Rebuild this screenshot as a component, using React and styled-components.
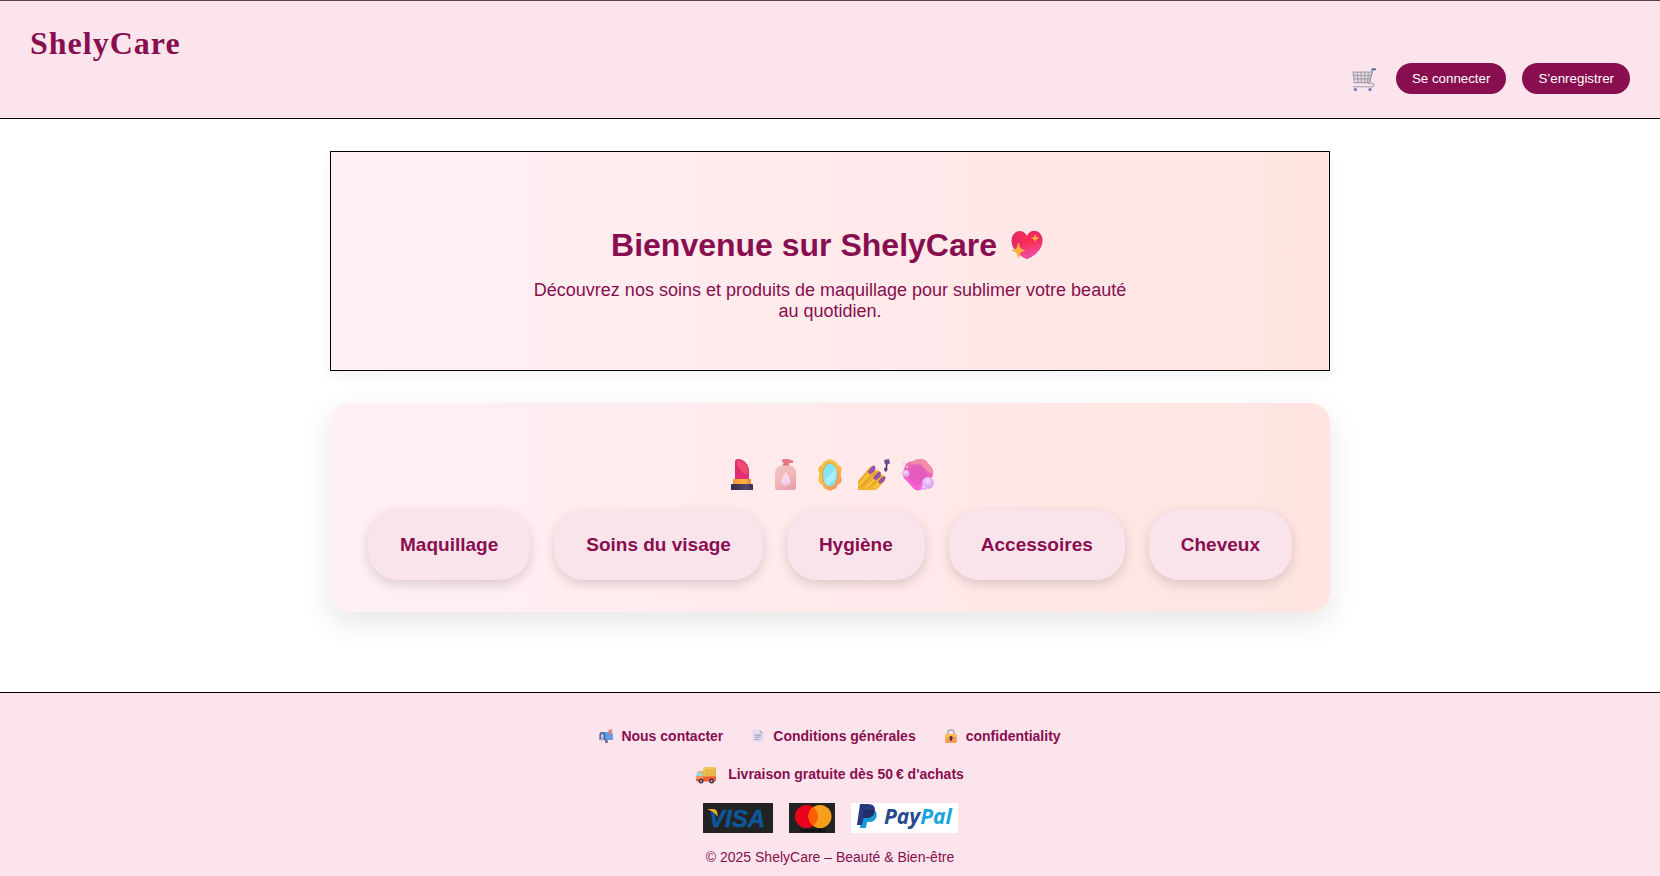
import React from "react";
import styled, { createGlobalStyle } from "styled-components";

const plum = "#880e4f";
const blush = "#fce4ec";

const GlobalStyle = createGlobalStyle`
  *, *::before, *::after { box-sizing: border-box; }
  body {
    margin: 0;
    background: #fff;
    color: ${plum};
    font-family: "Liberation Sans", Arial, sans-serif;
  }
  h1, p, ul { margin: 0; padding: 0; }
`;

const Page = styled.div`
  display: flex;
  flex-direction: column;
  min-height: 100vh;
`;

const Header = styled.header`
  display: flex;
  flex-direction: column;
  gap: 2px;
  padding: 24px 30px;
  background: ${blush};
  border-top: 1px solid #5a444c;
  border-bottom: 1px solid #000;
`;

const Brand = styled.a`
  align-self: flex-start;
  color: ${plum};
  font: bold 32px/36px "Liberation Serif", "Times New Roman", serif;
  letter-spacing: 1px;
  text-decoration: none;
`;

const Account = styled.nav`
  display: flex;
  align-items: center;
  justify-content: flex-end;
  gap: 16px;
`;

const CartButton = styled.button`
  display: flex;
  padding: 2px 4px 0;
  border: 0;
  background: none;
  cursor: pointer;
`;

const PillButton = styled.button`
  padding: 8px 16px;
  border: 0;
  border-radius: 20px;
  background: ${plum};
  color: #fff;
  font-family: inherit;
  line-height: 15px;
  cursor: pointer;
`;

const Main = styled.main`
  display: flex;
  flex-direction: column;
  gap: 32px;
  width: 100%;
  max-width: 1000px;
  margin: 32px auto 80px;
`;

const Panel = styled.section`
  background: linear-gradient(to right, #fff0f5, #ffe4e1);
  text-align: center;
`;

const Hero = styled(Panel)`
  padding: 74px 32px 48px;
  border: 1px solid #000;
  box-shadow: 0 4px 12px rgba(0, 0, 0, 0.06);
`;

const Title = styled.h1`
  display: flex;
  align-items: center;
  justify-content: center;
  gap: 14px;
  padding-right: 6px;
  font-size: 32px;
  line-height: 38px;
`;

const Intro = styled.p`
  max-width: 600px;
  margin: 16px auto 0;
  font-size: 18px;
  line-height: 21px;
`;

const Categories = styled(Panel)`
  padding: 56px 32px 32px;
  border-radius: 20px;
  box-shadow: 0 10px 30px rgba(0, 0, 0, 0.1);
`;

const IconRow = styled.div`
  display: flex;
  justify-content: center;
  gap: 12px;
  margin-bottom: 19px;
`;

const CategoryList = styled.nav`
  display: flex;
  flex-wrap: wrap;
  justify-content: center;
  gap: 24px;
`;

const CategoryLink = styled.a`
  padding: 24px 32px;
  border-radius: 30px;
  background: #fae4ec;
  box-shadow: 0 4px 12px rgba(0, 0, 0, 0.15);
  color: ${plum};
  font-size: 19px;
  font-weight: bold;
  line-height: 22px;
  text-decoration: none;
`;

const Footer = styled.footer`
  display: flex;
  flex: 1;
  flex-direction: column;
  align-items: center;
  padding: 35px 16px 8px;
  background: ${blush};
  border-top: 1px solid #000;
  font-size: 14px;
  line-height: 16px;
`;

const FooterLinks = styled.ul`
  display: flex;
  flex-wrap: wrap;
  gap: 28px;
  list-style: none;
`;

const FooterLink = styled.a`
  display: flex;
  align-items: center;
  gap: 8px;
  color: ${plum};
  font-weight: bold;
  text-decoration: none;
`;

const Delivery = styled.p`
  display: flex;
  align-items: center;
  gap: 12px;
  margin-top: 20px;
  font-weight: bold;
`;

const Payments = styled.div`
  display: flex;
  gap: 16px;
  margin: 19px 0 16px;
`;

const Svg = styled.svg`
  display: block;
  flex: none;
`;

const Icon = ({ size = 32, children, ...rest }) => (
  <Svg width={size} height={size} viewBox="0 0 32 32" aria-hidden="true" {...rest}>
    {children}
  </Svg>
);

const CartIcon = () => (
  <Icon size={24} fill="none" strokeLinejoin="round" strokeLinecap="round">
    <path d="M1.5 5.5H26L22.5 20H4.5Z" fill="#e4dce4" />
    <path d="M1.5 5.5H26M1.5 10H25M2 14.5H24M2.5 19.5H22.5M1.5 5.5L3 19.5M7 5.5L8 20M12 5.5L12.5 20M17 5.5L17 20M22 5.5L20.5 20" stroke="#aaa0aa" strokeWidth="1.5" />
    <path d="M30 1.5H27.5L22.5 20.5H26C31 20.5 30 25 26.5 25H2" stroke="#b8b3c3" strokeWidth="2.2" />
    <path d="M27.5 3L23.5 19" stroke="#8c899c" strokeWidth="1.2" />
    <path d="M27 1.8H31" stroke="#466a9e" strokeWidth="2.4" />
    <circle cx="4.5" cy="28.8" r="2.2" fill="#6e78b5" />
    <circle cx="24" cy="28.8" r="2.2" fill="#6e78b5" />
  </Icon>
);

const heartShape =
  "M16 7C13 1 8 1.2 5 3C0 6 -.5 13 2 18C5 24 11 28 16 30C21 28 27 24 30 18C33 12 31.5 5 27 2.8C22.5 .5 18 2.5 16 7Z";

const HeartIcon = () => (
  <Icon>
    <defs>
      <radialGradient id="heart" cx="0.55" cy="0.35" r="0.7">
        <stop offset="0" stopColor="#ff2c50" />
        <stop offset="0.5" stopColor="#ee2b60" />
        <stop offset="1" stopColor="#cf2d6c" />
      </radialGradient>
      <linearGradient id="heartGlow" x1="0.3" y1="0" x2="0.6" y2="1">
        <stop offset="0.45" stopColor="#ff5ca5" stopOpacity="0" />
        <stop offset="1" stopColor="#f94fb0" />
      </linearGradient>
    </defs>
    <path d={heartShape} fill="url(#heart)" />
    <path d={heartShape} fill="url(#heartGlow)" />
    <path d="M7.5 14C8.3 19 9.3 20.5 13.5 21.5C9.5 22.5 8.5 24 7.5 29C6.5 24 5.3 22.5 1 21.5C5.5 20.5 6.7 19 7.5 14Z" fill="#ffb13d" stroke="#ffad42" />
    <path d="M24.2 5.5C24.6 8 25.4 8.8 28 9.2C25.4 9.7 24.6 10.5 24.2 13C23.7 10.5 23 9.7 20.5 9.2C23 8.8 23.7 8 24.2 5.5Z" fill="#ffb03e" stroke="#ffae42" strokeWidth=".6" />
  </Icon>
);

const LipstickIcon = () => (
  <Icon>
    <defs>
      <linearGradient id="lip" x1="0" x2="1" y2="1">
        <stop offset="0" stopColor="#d92d5b" />
        <stop offset="1" stopColor="#e82a80" />
      </linearGradient>
      <linearGradient id="lipGold" x1="0" x2="1">
        <stop offset="0" stopColor="#f79444" />
        <stop offset="0.6" stopColor="#ffb735" />
        <stop offset="1" stopColor="#e78b3d" />
      </linearGradient>
      <linearGradient id="lipBase" x1="0" x2="1">
        <stop offset="0" stopColor="#302b44" />
        <stop offset="0.7" stopColor="#56476a" />
        <stop offset="1" stopColor="#393048" />
      </linearGradient>
    </defs>
    <path d="M9 21V3C9 1 10 0 12 0C18 0 23 6 23 12V21Z" fill="url(#lip)" />
    <path d="M11 1.2C16 .5 22 6 22.300 12C22.300 16 19 16 16 13C12 9 9.500 4 11 1.200Z" fill="#f04a72" />
    <path d="M7 20.500Q7 20 8 20H24Q25 20 25 20.500V26H7Z" fill="url(#lipGold)" />
    <path d="M5 26Q5 25 6 25H26Q27 25 27 26V31H5Z" fill="url(#lipBase)" />
  </Icon>
);

const LotionIcon = () => (
  <Icon>
    <defs>
      <linearGradient id="lotion" x1="0" y1="0" x2="0.6" y2="1">
        <stop offset="0" stopColor="#edc5c4" />
        <stop offset="0.5" stopColor="#f3b9ba" />
        <stop offset="1" stopColor="#eba3b2" />
      </linearGradient>
      <linearGradient id="drop" x1="0" y1="0" x2="0" y2="1">
        <stop offset="0" stopColor="#fae6eb" />
        <stop offset="1" stopColor="#f1c8ec" />
      </linearGradient>
    </defs>
    <path d="M13 0H18L23 1.500V4H19V7H14V4L12 3V1Z" fill="#e87983" />
    <path d="M13 4.500H18V8H13Z" fill="#df727a" />
    <path d="M11 6.500H20Q26 8 26 14V29Q26 31 24 31H7Q5 31 5 29V14Q5 8 11 6.500Z" fill="url(#lotion)" />
    <path d="M15.800 12.500C17 16 20.500 19 20.500 22.500C20.500 28 11 28 11 22.500C11 19 14.500 16 15.800 12.500Z" fill="url(#drop)" />
  </Icon>
);

const MirrorIcon = () => (
  <Icon>
    <defs>
      <linearGradient id="frame" x1="0" y1="0" x2="0.7" y2="1">
        <stop offset="0" stopColor="#eab737" />
        <stop offset="0.5" stopColor="#ffc34b" />
        <stop offset="1" stopColor="#f3935f" />
      </linearGradient>
    </defs>
    <path d="M13 1.500Q16 -.8 19 1.500Q22.500 2 23.500 5.500Q28.500 7.500 27.500 12Q26 15.500 27.500 19Q28.700 24 23.500 26Q22.500 30 19 30.500Q16 32.800 13 30.500Q9.500 30 8.500 26Q3.300 24 4.500 19Q6 15.500 4.500 12Q3.500 7.500 8.500 5.500Q9.500 2 13 1.500Z" fill="url(#frame)" />
    <ellipse cx="16" cy="16" rx="7.500" ry="12" fill="#86e3f3" stroke="#e2a03e" />
    <path d="M10 22L22 9Q23 14 21.500 19L14 26.500Q11 25.500 10 22Z" fill="#a8edfa" />
  </Icon>
);

const NailsIcon = () => (
  <Icon>
    <defs>
      <linearGradient id="fingers" x1="0" y1="0" x2="1" y2="1">
        <stop offset="0" stopColor="#eaa42e" />
        <stop offset="1" stopColor="#f4bd30" />
      </linearGradient>
    </defs>
    <path d="M0 22L12 8Q15 6 17 9L16 12Q20 10 22.500 13L22 16Q26 15 27 18Q28 21 24 25L18 31H0Z" fill="url(#fingers)" />
    <path d="M3 28L18 13M10 30L23 17" stroke="#dc9726" fill="none" />
    <path d="M1 26L14 11M7 30L20 17M16 29L25 20" stroke="#ffca39" strokeWidth="1.500" />
    <path d="M10 12L14 7.500Q17 5 17.500 9Q17.500 12 13 15Q10 15.500 10 12ZM15.500 18L19 14Q23 11 23 15Q23 18 18 21Q15 21 15.500 18ZM20.500 22L23.500 18.500Q28 16 27.500 19.500Q27 22 23 24.500Q20 25 20.500 22Z" fill="#9852a7" />
    <path d="M26 1L31 0L32 4.500L27 5.500Z" fill="#71498f" />
    <path d="M29 5L28 10" stroke="#433057" strokeWidth="1.500" />
    <path d="M26 9L30 9.500L28 13L26.500 12Z" fill="#5a3673" />
  </Icon>
);

const SoapIcon = () => (
  <Icon>
    <defs>
      <linearGradient id="soap" x1="0.6" y1="0" x2="0.4" y2="1">
        <stop offset="0" stopColor="#eb78a5" />
        <stop offset="0.5" stopColor="#ec61bd" />
        <stop offset="1" stopColor="#ff60dc" />
      </linearGradient>
      <radialGradient id="bubble" cx="0.45" cy="0.3">
        <stop offset="0" stopColor="#f5ddff" />
        <stop offset="1" stopColor="#dfa5f2" />
      </radialGradient>
    </defs>
    <path d="M11 2Q14 0 18 0Q23 0 25 3L30 9Q32.500 13 30 18L21 29Q16 34 11 29L2 19Q0 16 1 13L3 7Q4 4 7 3Z" fill="url(#soap)" />
    <path d="M12 2Q20 -1.500 24.500 3L30 9.500Q32 12 31 15L26 13L20 6Q18 4 13 4.500L7 5Z" fill="#f28fa6" />
    <path d="M11 7Q15 4.500 19 7L25 13Q26.500 15 24 18L17 25Q14 27 10 23L6 18Q4 15 6 12Z" fill="#e055c0" opacity=".6" />
    <circle cx="4" cy="14.500" r="3.500" fill="url(#bubble)" />
    <circle cx="26" cy="24" r="6" fill="url(#bubble)" />
    <circle cx="22" cy="28.500" r="2.500" fill="url(#bubble)" />
    <circle cx="2" cy="4.500" r="1.300" fill="#f2c9e8" />
    <circle cx="5" cy="8" r="1" fill="#f2c9e8" />
  </Icon>
);

const MailboxIcon = () => (
  <Icon size={14}>
    <path d="M14 19H20V32H14Z" fill="#766580" />
    <path d="M7 7H25Q32 7 32 15V25H9Z" fill="#5f9ee4" />
    <path d="M7 7Q14 7 14 15V25H1V14Q1 7 7 7Z" fill="#405991" />
    <path d="M7 10Q11 10 11 15V22H4V15Q4 10 7 10Z" fill="#b6bedf" />
    <path d="M3 23H10V28H5Z" fill="#d0c4dd" />
    <path d="M22 1H30V7H26V15H23V7H22Z" fill="#ee7c79" />
  </Icon>
);

const DocumentIcon = () => (
  <Icon size={14}>
    <path d="M3 1H20L29 10V31H3Z" fill="#e5dcef" />
    <path d="M20 1L29 10H20Z" fill="#bfb6d1" />
    <path d="M8 14H23M8 19H23M8 24H19" stroke="#a49bb7" strokeWidth="2.500" />
  </Icon>
);

const LockIcon = () => (
  <Icon size={14}>
    <path d="M9 13V8Q9 2 16 2Q23 2 23 8V13" fill="none" stroke="#bcafbc" strokeWidth="4" />
    <path d="M3 12H29V30Q29 32 27 32H5Q3 32 3 30Z" fill="#f69b4d" />
    <path d="M3 12H29V18Q16 15 3 22Z" fill="#ffbd4c" />
    <path d="M16 16A4 4 0 0 1 18.500 23V27H13.500V23A4 4 0 0 1 16 16Z" fill="#55354b" />
  </Icon>
);

const TruckIcon = () => (
  <Icon size={20} viewBox="0 -4 32 32" overflow="visible">
    <path d="M12 3Q12 1 14 1H30Q32 1 32 3V18H12Z" fill="#e7b846" />
    <path d="M12 1H31L29 4H14V17H12Z" fill="#f0ca5b" />
    <path d="M2 9Q3 7 5 7H13V17H0Z" fill="#edac4b" />
    <path d="M3 9H10V16H0Z" fill="#8ed7f5" />
    <path d="M0 16H32V22Q32 24 30 24H2Q0 24 0 21Z" fill="#f15b36" />
    <path d="M0 16H11V20H0Z" fill="#ff9550" />
    <circle cx="8" cy="23" r="4" fill="#443345" />
    <circle cx="25" cy="23" r="4" fill="#443345" />
    <circle cx="8" cy="23" r="1.600" fill="#c7b8cc" />
    <circle cx="25" cy="23" r="1.600" fill="#c7b8cc" />
  </Icon>
);

const VisaLogo = () => (
  <Svg width="70" height="30" viewBox="0 0 70 30" role="img" aria-label="Visa">
    <rect width="70" height="30" fill="#222" />
    <text x="6" y="24" fill="#0e5697" stroke="#0e5697" strokeWidth=".6" fontFamily="Liberation Sans, Arial, sans-serif" fontSize="24" fontWeight="bold" fontStyle="italic">VISA</text>
    <path d="M4 6H11Q13.500 6 14 8.500L15 14Q11 8.500 4 6Z" fill="#f2a72b" />
  </Svg>
);

const MastercardLogo = () => (
  <Svg width="46" height="30" viewBox="0 0 46 30" role="img" aria-label="Mastercard">
    <rect width="46" height="30" fill="#222" />
    <circle cx="17.500" cy="13.500" r="11.500" fill="#eb001b" />
    <circle cx="31" cy="13.500" r="11.500" fill="#f79e1b" />
    <path d="M24.250 4.200A11.500 11.500 0 0 1 24.250 22.800A11.500 11.500 0 0 1 24.250 4.200Z" fill="#ff5f00" />
    <text x="24" y="29" textAnchor="middle" fill="#000" fontFamily="Liberation Sans, Arial, sans-serif" fontSize="5">mastercard</text>
  </Svg>
);

const PaypalLogo = () => (
  <Svg width="107" height="30" viewBox="0 0 107 30" role="img" aria-label="PayPal">
    <rect width="107" height="30" fill="#fff" />
    <path d="M12 6H21Q27 8 25.500 14Q24 19 18 19H16L15 25H9Z" fill="#179bd7" />
    <path d="M9 1H17Q24 1 24 7Q23 15 15 15H12.500L11 22H6Z" fill="#253b80" />
    <path d="M13 7H23.800Q23 15 15 15H12L11.500 18Z" fill="#222d65" />
    <text x="33" y="21" fontFamily="Open Sans, Liberation Sans, sans-serif" fontSize="21" fontWeight="bold" fontStyle="italic">
      <tspan fill="#254b8d">Pay</tspan><tspan fill="#18a4dc">Pal</tspan>
    </text>
  </Svg>
);

const categories = ["Maquillage", "Soins du visage", "Hygiène", "Accessoires", "Cheveux"];

const footerLinks = [
  { label: "Nous contacter", icon: <MailboxIcon /> },
  { label: "Conditions générales", icon: <DocumentIcon /> },
  { label: "confidentiality", icon: <LockIcon /> },
];

export default function App() {
  return (
    <>
      <GlobalStyle />
      <Page>
        <Header>
          <Brand href="#">ShelyCare</Brand>
          <Account aria-label="Compte">
            <CartButton type="button" aria-label="Panier"><CartIcon /></CartButton>
            <PillButton type="button">Se connecter</PillButton>
            <PillButton type="button">S’enregistrer</PillButton>
          </Account>
        </Header>
        <Main>
          <Hero>
            <Title>Bienvenue sur ShelyCare <HeartIcon /></Title>
            <Intro>
              Découvrez nos soins et produits de maquillage pour sublimer votre beauté au quotidien.
            </Intro>
          </Hero>
          <Categories>
            <IconRow>
              <LipstickIcon />
              <LotionIcon />
              <MirrorIcon />
              <NailsIcon />
              <SoapIcon />
            </IconRow>
            <CategoryList aria-label="Catégories">
              {categories.map((name) => (
                <CategoryLink key={name} href="#">{name}</CategoryLink>
              ))}
            </CategoryList>
          </Categories>
        </Main>
        <Footer>
          <FooterLinks>
            {footerLinks.map(({ label, icon }) => (
              <li key={label}>
                <FooterLink href="#">{icon}{label}</FooterLink>
              </li>
            ))}
          </FooterLinks>
          <Delivery><TruckIcon />Livraison gratuite dès 50{"\u202f"}€ d'achats</Delivery>
          <Payments>
            <VisaLogo />
            <MastercardLogo />
            <PaypalLogo />
          </Payments>
          <p>© 2025 ShelyCare – Beauté &amp; Bien-être</p>
        </Footer>
      </Page>
    </>
  );
}
